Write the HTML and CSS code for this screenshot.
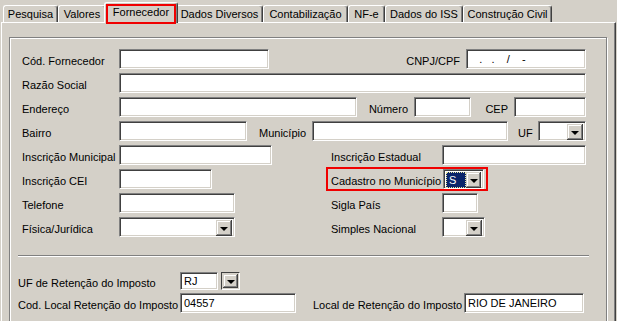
FILE: index.html
```html
<!DOCTYPE html>
<html lang="pt-BR">
<head>
    <meta charset="UTF-8">
    <title>Fornecedor</title>
    <link rel="stylesheet" href="styles.css">
</head>
<body>

<div class="window">
    <div class="tabs">
        <div class="tab t-pesquisa">Pesquisa</div>
        <div class="tab t-valores">Valores</div>
        <div class="tab t-fornecedor active">Fornecedor</div>
        <div class="tab t-diversos">Dados Diversos</div>
        <div class="tab t-contab">Contabilização</div>
        <div class="tab t-nfe">NF-e</div>
        <div class="tab t-iss">Dados do ISS</div>
        <div class="tab t-civil">Construção Civil</div>
    </div>

    <div class="panel">
        <div class="group">
            <div class="row">
                <span class="lbl">Cód. Fornecedor</span>
                <div class="field w150"></div>
                <span class="lbl grow right">CNPJ/CPF</span>
                <div class="field w120 mask">   .   .    /    -</div>
            </div>
            <div class="row">
                <span class="lbl">Razão Social</span>
                <div class="field grow"></div>
            </div>
            <div class="row">
                <span class="lbl">Endereço</span>
                <div class="field w238"></div>
                <span class="lbl w57 right">Número</span>
                <div class="field w57"></div>
                <span class="lbl w43 right">CEP</span>
                <div class="field w72"></div>
            </div>
            <div class="row">
                <span class="lbl">Bairro</span>
                <div class="field w128"></div>
                <span class="lbl w65 pad12">Município</span>
                <div class="field w196"></div>
                <span class="lbl w30 pad10">UF</span>
                <div class="combo w48"><span class="combo-text"></span><span class="drop"></span></div>
            </div>
            <div class="row">
                <div class="left">
                    <span class="lbl">Inscrição Municipal</span>
                    <div class="field w153"></div>
                </div>
                <span class="lbl w111">Inscrição Estadual</span>
                <div class="field w144"></div>
            </div>
            <div class="row">
                <div class="left">
                    <span class="lbl">Inscrição CEI</span>
                    <div class="field w93"></div>
                </div>
                <div class="highlight">
                    <span class="lbl w112">Cadastro no Município</span>
                    <div class="combo w41"><span class="combo-text"><span class="selected">S</span></span><span class="drop"></span></div>
                </div>
            </div>
            <div class="row">
                <div class="left">
                    <span class="lbl">Telefone</span>
                    <div class="field w116"></div>
                </div>
                <span class="lbl w111">Sigla País</span>
                <div class="field w36"></div>
            </div>
            <div class="row">
                <div class="left">
                    <span class="lbl">Física/Jurídica</span>
                    <div class="combo w116"><span class="combo-text"></span><span class="drop"></span></div>
                </div>
                <span class="lbl w111">Simples Nacional</span>
                <div class="combo w43"><span class="combo-text"></span><span class="drop"></span></div>
            </div>

            <div class="retencao">
                <div class="sep"></div>
                <div class="row short">
                    <span class="lbl w162">UF de Retenção do Imposto</span>
                    <div class="field w38">RJ</div>
                    <div class="drop-frame"><span class="drop"></span></div>
                </div>
                <div class="row">
                    <span class="lbl w162">Cod. Local Retenção do Imposto</span>
                    <div class="field w116">04557</div>
                    <span class="lbl w168 pad17">Local de Retenção do Imposto</span>
                    <div class="field w120">RIO DE JANEIRO</div>
                </div>
            </div>
        </div>
    </div>
</div>

</body>
</html>
```

FILE: styles.css
```css
body {
    margin: 0;
    background-color: #D4D0C8;
    font-family: 'Liberation Sans', Arial, sans-serif;
    font-size: 11px;
    color: #000;
    overflow: hidden;
}
.window {
    padding: 0 1px;
}

/* tabs */
.tabs {
    display: flex;
    align-items: flex-end;
    height: 22px;
    padding-left: 2px;
}
.tab {
    box-sizing: border-box;
    height: 17px;
    padding-top: 2px;
    line-height: 13px;
    text-align: center;
    white-space: nowrap;
    border-top: 1px solid #fff;
    border-left: 1px solid #fff;
    border-right: 1px solid #404040;
    border-radius: 3px 3px 0 0;
    box-shadow: inset -1px 0 #808080;
    background-color: #D4D0C8;
}
.tab.active {
    position: relative;
    z-index: 1;
    height: 21px;
    margin: 0 -2px -1px;
    padding-top: 3px;
}
.tab.active::after {
    content: '';
    position: absolute;
    left: 1px;
    right: 1px;
    top: 1px;
    bottom: -1px;
    border: 2px solid #F00000;
}
.t-pesquisa { width: 55px; }
.t-valores { width: 48px; }
.t-fornecedor { width: 74px; }
.t-diversos { width: 87px; }
.t-contab { width: 85px; }
.t-nfe { width: 37px; }
.t-iss { width: 78px; }
.t-civil { width: 89px; }

/* panels */
.panel {
    box-sizing: border-box;
    height: 299px;
    overflow: hidden;
    padding: 14px 8px 0 7px;
    border-top: 1px solid #fff;
    border-left: 1px solid #fff;
    border-right: 1px solid #404040;
    box-shadow: inset -1px 0 #808080;
}
.group {
    height: 300px;
    padding: 11px 20px 0 12px;
    border: 1px solid #808080;
    box-shadow: inset 1px 1px #fff, 1px 1px #fff;
}

/* rows */
.row {
    display: flex;
    align-items: center;
    height: 20px;
    margin-bottom: 4px;
}
.row.short {
    height: 18px;
    margin-bottom: 3px;
}
.left {
    display: flex;
    align-items: center;
    width: 309px;
    flex-shrink: 0;
}
.lbl {
    box-sizing: border-box;
    width: 97px;
    flex-shrink: 0;
    padding-top: 3px;
    white-space: nowrap;
}
.lbl.right {
    text-align: right;
    padding-right: 6px;
}
.grow { flex: 1; }
.pad10 { padding-left: 10px; }
.pad12 { padding-left: 12px; }
.pad17 { padding-left: 17px; }

.highlight {
    display: flex;
    align-items: center;
    height: 20px;
    margin-left: -3px;
    padding: 0 2px 0 3px;
    outline: 2px solid #F00000;
}

/* inputs */
.field, .combo {
    box-sizing: border-box;
    height: 20px;
    flex-shrink: 0;
    background-color: #fff;
    border: 1px solid;
    border-color: #808080 #fff #fff #808080;
    box-shadow: inset 1px 1px #404040, inset -1px -1px #D4D0C8;
}
.field {
    padding-left: 3px;
    line-height: 18px;
    white-space: pre;
}
.row.short .field {
    height: 18px;
    line-height: 16px;
}
.combo {
    display: flex;
    padding: 2px;
}
.combo-text {
    flex: 1;
    line-height: 16px;
}
.selected {
    display: block;
    box-sizing: border-box;
    width: 20px;
    height: 16px;
    padding-left: 2px;
    line-height: 14px;
    color: #fff;
    background-color: #0A246A;
    border: 1px dotted #E8E8A0;
}
.drop {
    display: flex;
    align-items: center;
    justify-content: center;
    box-sizing: border-box;
    width: 16px;
    height: 16px;
    background-color: #D4D0C8;
    box-shadow: inset -1px -1px #404040, inset 1px 1px #D4D0C8, inset -2px -2px #808080, inset 2px 2px #fff;
}
.drop::after {
    content: '';
    margin-top: 1px;
    border-top: 4px solid #000;
    border-left: 4px solid transparent;
    border-right: 4px solid transparent;
}
.drop-frame {
    box-sizing: border-box;
    width: 19px;
    height: 18px;
    margin-left: 3px;
    padding: 1px;
    border: 1px solid;
    border-color: #404040 #fff #fff #404040;
}
.drop-frame .drop {
    width: 15px;
    height: 14px;
}

.retencao {
    margin-left: -4px;
}
.sep {
    width: 571px;
    margin: 18px 0 15px;
    border-top: 1px solid #808080;
    border-bottom: 1px solid #fff;
}

.w30 { width: 30px; }
.w36 { width: 36px; }
.w38 { width: 38px; }
.w41 { width: 41px; }
.w43 { width: 43px; }
.w48 { width: 48px; }
.w57 { width: 57px; }
.w65 { width: 65px; }
.w72 { width: 72px; }
.w93 { width: 93px; }
.w111 { width: 111px; }
.w112 { width: 112px; }
.w116 { width: 116px; }
.w120 { width: 120px; }
.w128 { width: 128px; }
.w144 { width: 144px; }
.w150 { width: 150px; }
.w153 { width: 153px; }
.w162 { width: 162px; }
.w168 { width: 168px; }
.w196 { width: 196px; }
.w238 { width: 238px; }
```
